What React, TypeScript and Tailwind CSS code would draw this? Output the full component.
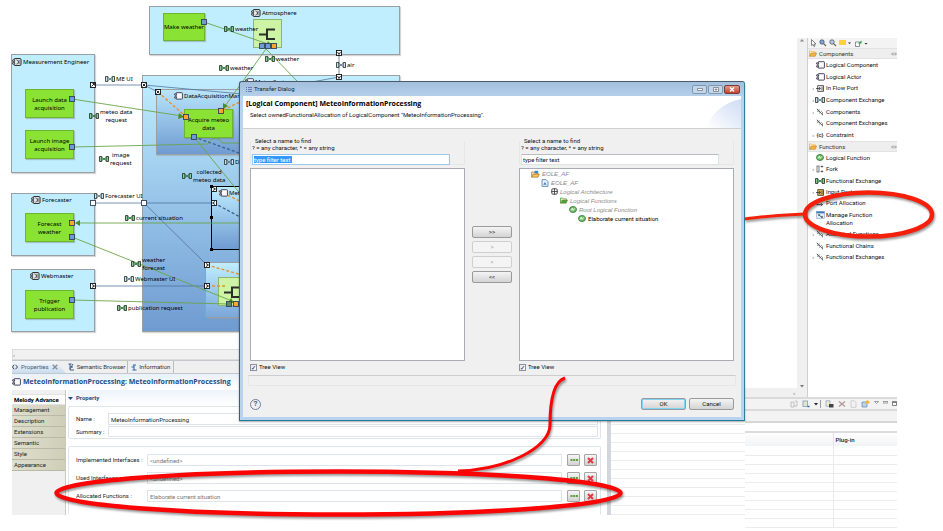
import type { ReactNode } from "react";

const UI = "font-['Roboto','Noto_Sans',sans-serif] text-[6px] leading-[8px]";

/* ---------- icons ---------- */

function ExchangeIcon({ green = false }: { green?: boolean }) {
  const c = green ? "#7fd08a" : "#cfe2f0";
  return (
    <svg className="h-[6px] w-[10px] shrink-0" viewBox="0 0 10 6">
      <path d="M.5 .5h2.300v5H.5zM9.500 .5H7.200v5h2.300z" fill={c} stroke="#1c2b24" strokeWidth=".8" />
      <path d="M2.800 1.200L4.200 2.600h1.600L7.200 1.200M2.800 4.800L4.200 3.400h1.600L7.200 4.800" fill="none" stroke="#1c2b24" strokeWidth=".7" />
      <path d="M3 3h4" stroke={green ? "#2f9a3a" : "#7fa4bf"} strokeWidth="1" />
    </svg>
  );
}

function ActorIcon() {
  return (
    <svg className="h-[8px] w-[10px] shrink-0" viewBox="0 0 10 8">
      <rect x="2" y=".6" width="7" height="6.8" rx="1" fill="#e8eef2" stroke="#222" strokeWidth="1" />
      <path d="M.5 2h2.2v1.4H.5zM.5 4.6h2.2V6H.5z" fill="#fff" stroke="#222" strokeWidth=".7" />
      <path d="M4.5 2l2 1.4v1.2l-2 1.4M7 2v4" fill="none" stroke="#333" strokeWidth=".8" />
    </svg>
  );
}

function ComponentIcon() {
  return (
    <svg className="h-[8px] w-[9px] shrink-0" viewBox="0 0 9 8">
      <rect x="2" y=".7" width="6.4" height="6.4" rx=".6" fill="#fff" stroke="#335" strokeWidth=".9" />
      <path d="M.6 1.8H2.6v1.2H.6zM.6 4.8h2V6h-2z" fill="#fff" stroke="#223" strokeWidth=".7" />
    </svg>
  );
}

function ForkGlyph() {
  return (
    <svg className="h-[14px] w-[17px]" viewBox="0 0 17 14">
      <path d="M0 7.500h7.500M16 2.500H8v9.500h8" fill="none" stroke="#2b2f2a" strokeWidth="2" />
    </svg>
  );
}

function FolderIcon({ color = "#f0b64a" }: { color?: string }) {
  return (
    <svg className="h-[7px] w-[8px] shrink-0" viewBox="0 0 8 7">
      <path d="M.5 6.2V1h2.2l.8.9h2.8v1.2" fill="#fff4cf" stroke={color} strokeWidth=".8" />
      <path d="M.5 6.3L2 3h5.6L6.2 6.3z" fill={color} stroke="#a8741c" strokeWidth=".5" />
    </svg>
  );
}

function FunctionIcon() {
  return (
    <svg className="h-[7px] w-[8px] shrink-0" viewBox="0 0 8 7">
      <ellipse cx="4" cy="3.5" rx="3.5" ry="3" fill="#6fc06a" stroke="#2c6e2f" strokeWidth=".8" />
      <path d="M2 4.6l1.4-2.6.5 2.4L6.4 2" fill="none" stroke="#f4fff2" strokeWidth=".8" />
    </svg>
  );
}

function LinkIcon() {
  return (
    <svg className="h-[8px] w-[8px] shrink-0" viewBox="0 0 8 8">
      <path d="M.8 .8l6 6.200" fill="none" stroke="#3f4540" strokeWidth=".9" />
      <path d="M1.500 3.500L4 1.500M3 5.500L6 3M2 1.500v2.500M6.500 4v3.500" fill="none" stroke="#66756a" strokeWidth=".7" />
    </svg>
  );
}

function PortIcon({ color = "#fff" }: { color?: string }) {
  return (
    <svg className="h-[7px] w-[8px] shrink-0" viewBox="0 0 8 7">
      <rect x="1.8" y=".7" width="5.6" height="5.6" fill={color} stroke="#333" strokeWidth=".8" />
      <path d="M0 3.5h4M3 2l1.8 1.5L3 5M6 1.5v4" fill="none" stroke="#333" strokeWidth=".8" />
    </svg>
  );
}

function ForkIcon() {
  return (
    <svg className="h-[8px] w-[8px] shrink-0" viewBox="0 0 8 8">
      <rect x="1" y="1" width="2" height="6" fill="#fff" stroke="#444" strokeWidth=".7" />
      <path d="M4.6 1.5h2.6M4.6 6.5h2.6M6 .6v2M6 5.4v2" stroke="#444" strokeWidth=".8" />
    </svg>
  );
}

function ConstraintIcon() {
  return <span className="w-[9px] text-center font-bold text-[#444]">{"{c}"}</span>;
}

function AllocationIcon() {
  return (
    <svg className="h-[7px] w-[8px] shrink-0" viewBox="0 0 8 7">
      <path d="M.8 2.2v2.4h5M4.8 3.2l1.8 1.4L4.8 6" fill="none" stroke="#444" strokeWidth=".9" />
    </svg>
  );
}

function ManageIcon() {
  return (
    <svg className="h-[8px] w-[9px] shrink-0" viewBox="0 0 9 8">
      <rect x=".5" y=".5" width="8" height="7" fill="#dcebf8" stroke="#8aa6c4" strokeWidth=".6" />
      <path d="M.5 .5h8v1.8h-8z" fill="#3f78b8" />
      <path d="M2 3.5h2v1H2zM5 5.4h2v1H5z" fill="#222" />
      <path d="M3.5 4.5L5.5 6" stroke="#222" strokeWidth=".7" />
    </svg>
  );
}

function ProjectIcon() {
  return (
    <svg className="h-[8px] w-[9px] shrink-0" viewBox="0 0 9 8">
      <path d="M.6 7V2h2l.8 1h3.4v1.2" fill="#ffe9a8" stroke="#a87a1c" strokeWidth=".7" />
      <path d="M.6 7.2L2 4.2h6.4L7 7.2z" fill="#f6c65c" stroke="#8a6414" strokeWidth=".6" />
      <path d="M3.4 .8h3.8v2.4H3.4z" fill="#3a86c4" />
    </svg>
  );
}

function ModelIcon() {
  return (
    <svg className="h-[8px] w-[8px] shrink-0" viewBox="0 0 8 8">
      <path d="M1 .6h4l2 2v4.8H1z" fill="#e8f2fb" stroke="#4b7aa8" strokeWidth=".8" />
      <path d="M2.2 5.8L4 3l1.6 2.8z" fill="#3d84c6" />
    </svg>
  );
}

function ArchitectureIcon() {
  return (
    <svg className="h-[7px] w-[7px] shrink-0" viewBox="0 0 7 7">
      <rect x=".8" y=".8" width="5.4" height="5.4" rx="1" fill="#fff" stroke="#333" strokeWidth=".9" />
      <path d="M3.5 .5v6M.5 3.5h6" stroke="#333" strokeWidth=".8" />
    </svg>
  );
}

/* ---------- diagram ---------- */

function Box({ className, children }: { className: string; children?: ReactNode }) {
  return (
    <div className={`absolute border border-[#9a9fa3] shadow-[1px_1px_1px_#9996] ${className}`}>{children}</div>
  );
}

function FunctionNode({ className, children }: { className: string; children: ReactNode }) {
  return (
    <div
      className={`absolute flex items-center justify-center whitespace-nowrap border border-[#6fb52c] bg-[#8ae234] text-center text-black shadow-[1px_1px_1px_#7776] ${className}`}
    >
      {children}
    </div>
  );
}

function Label({ className, icon, children }: { className: string; icon: ReactNode; children: ReactNode }) {
  return (
    <div className={`absolute flex items-center gap-px whitespace-nowrap text-black ${className}`}>
      {icon}
      <span className="text-center">{children}</span>
    </div>
  );
}

const squarePorts: [number, number, string][] = [
  [204, 22, "#6c9bd8"],
  [72, 99, "#6c9bd8"],
  [72, 147, "#6c9bd8"],
  [262, 46, "#6c9bd8"],
  [268, 46, "#6c9bd8"],
  [274, 46, "#fba62c"],
  [186, 117, "#fba62c"],
  [221, 111, "#fba62c"],
  [194, 137, "#6c9bd8"],
  [72, 223, "#fba62c"],
  [72, 237, "#6c9bd8"],
  [72, 300, "#6c9bd8"],
  [229, 304, "#5b8a6a"],
  [236, 304, "#fba62c"],
  [93, 203, "#ffffff"],
  [144, 203, "#ffffff"],
];

const arrowPorts: [number, number, string][] = [
  [93, 85, "M-1.5 1.5L1.5-1.5M-.5-1.5h2v2"],
  [144, 85, "M-1.5 1.5L1.5-1.5M1.5 1.5L-1-1"],
  [158, 92, "M-1.5-1.5L1.5 1.5M-1.5 1.5L1-1"],
  [339, 53, "M-1.5-1L0 1.5L1.5-1"],
  [339, 77, "M-1.5-1L0 1.5L1.5-1"],
  [93, 286, "M-1-1.5L1.5 0L-1 1.5"],
  [207, 265, "M-1-1.5L1.5 0L-1 1.5"],
  [207, 286, "M-1-1.5L1.5 0L-1 1.5"],
  [214, 189, "M-1-1.5L1.5 0L-1 1.5"],
  [214, 203, "M1-1.5L-1.5 0L1 1.5"],
];

function Diagram() {
  return (
    <div className="relative h-[349px] overflow-hidden font-['Noto_Sans',sans-serif] text-[6px] leading-[8px]">
      <Box className="left-[149px] top-[6px] h-[49px] w-[251px] bg-[#c0eeff]" />
      <Box className="left-[11px] top-[54px] h-[119px] w-[84px] bg-[#c0eeff]" />
      <Box className="left-[11px] top-[193px] h-[63px] w-[84px] bg-[#c0eeff]" />
      <Box className="left-[11px] top-[269px] h-[63px] w-[84px] bg-[#c0eeff]" />
      <Box className="left-[142px] top-[75px] h-[257px] w-[258px] bg-linear-to-b from-[#c0eeff] to-[#6f9bd1]" />
      <Box className="left-[156px] top-[89px] h-[66px] w-[150px] bg-linear-to-b from-[#b9e4fb] to-[#6f9bd1]" />
      <Box className="left-[205px] top-[262px] h-[56px] w-[100px] bg-linear-to-b from-[#c0eeff] to-[#7ba7da]" />
      <div className="absolute left-[211px] top-[186px] h-[64px] w-[100px] border border-black bg-linear-to-b from-[#c0eeff] to-[#6f9bd1]" />

      <FunctionNode className="left-[163px] top-[13px] h-[28px] w-[42px]">Make weather</FunctionNode>
      <FunctionNode className="left-[25px] top-[89px] h-[29px] w-[49px]">Launch data<br />acquisition</FunctionNode>
      <FunctionNode className="left-[25px] top-[130px] h-[29px] w-[49px]">Launch image<br />acquisition</FunctionNode>
      <FunctionNode className="left-[184px] top-[109px] h-[29px] w-[49px]">Acquire meteo<br />data</FunctionNode>
      <FunctionNode className="left-[25px] top-[213px] h-[29px] w-[49px]">Forecast<br />weather</FunctionNode>
      <FunctionNode className="left-[25px] top-[290px] h-[29px] w-[49px]">Trigger<br />publication</FunctionNode>
      <div className="absolute left-[253px] top-[19px] flex h-[29px] w-[29px] items-center justify-center border border-[#8ab868] bg-[#cdf3a4]">
        <ForkGlyph />
      </div>
      <div className="absolute left-[218px] top-[277px] flex h-[29px] w-[29px] items-center justify-center border border-[#8ab868] bg-[#cdf3a4]">
        <ForkGlyph />
      </div>

      <svg className="absolute left-0 top-0 h-[349px] w-[420px]" viewBox="0 0 420 349" fill="none">
        <g stroke="#4a6f9a" strokeWidth="1" opacity=".75">
          <path d="M93 85H144L242 94M144 85L158 92M339 53V77L312 82" />
          <path d="M93 203H214M144 203L207 265M93 286H207" />
        </g>
        <g stroke="#6ba548" strokeWidth=".9">
          <path d="M204 22L268 44M266 49L225 106M266 49L298 82M72 99L182 116" />
          <path d="M72 147L208 144C209 137 221 137 222 143H242M194 137L242 196" />
          <path d="M242 223H78M72 237L232 301M72 300L229 304" />
        </g>
        <g fill="#4a8f22">
          <path d="M272 46l-6 0 2-5zM223 109l0-6 5 3zM184 117l-6 2 1-6zM75 223l5-3v6zM234 303l-6 0 3-5z" />
        </g>
        <g stroke="#e8932c" strokeWidth="1.4" strokeDasharray="3 2">
          <path d="M158 92L184 115M223 110L242 101M214 189L242 202M207 265L242 275M207 286H226" />
        </g>
        <g stroke="#39628f" strokeWidth="1.3" strokeDasharray="3 2">
          <path d="M194 137L242 154M214 203L242 218" />
        </g>
        {squarePorts.map(([x, y, fill]) => (
          <rect key={`${x}-${y}`} x={x - 2.5} y={y - 2.5} width="5" height="5" fill={fill} stroke="#33435a" strokeWidth=".9" />
        ))}
        {arrowPorts.map(([x, y, d]) => (
          <g key={`${x}-${y}`} transform={`translate(${x} ${y})`}>
            <rect x="-2.5" y="-2.5" width="5" height="5" fill="#fff" stroke="#111" strokeWidth=".9" />
            <path d={d} stroke="#111" strokeWidth=".9" />
          </g>
        ))}
        <path d="M210 185h3v3h-3zM210 216h3v3h-3zM210 248h3v3h-3z" fill="#000" />
      </svg>

      <Label className="left-[251px] top-[9px]" icon={<ActorIcon />}>Atmosphere</Label>
      <Label className="left-[12px] top-[58px]" icon={<ActorIcon />}>Measurement Engineer</Label>
      <Label className="left-[31px] top-[196px]" icon={<ActorIcon />}>Forecaster</Label>
      <Label className="left-[30px] top-[272px]" icon={<ActorIcon />}>Webmaster</Label>
      <Label className="left-[174px] top-[92px]" icon={<ComponentIcon />}>DataAcquisitionManager</Label>
      <Label className="left-[219px] top-[189px]" icon={<ComponentIcon />}>MeteoInformationProcessing</Label>
      <Label className="left-[245px] top-[78px]" icon={<ComponentIcon />}>MeteoSystem</Label>
      <Label className="left-[224px] top-[25px]" icon={<ExchangeIcon green />}>weather</Label>
      <Label className="left-[219px] top-[64px]" icon={<ExchangeIcon green />}>weather</Label>
      <Label className="left-[265px] top-[55px]" icon={<ExchangeIcon green />}>weather</Label>
      <Label className="left-[336px] top-[61px]" icon={<ExchangeIcon />}>air</Label>
      <Label className="left-[105px] top-[75px]" icon={<ExchangeIcon />}>ME UI</Label>
      <Label className="left-[89px] top-[108px]" icon={<ExchangeIcon green />}>meteo data<br />request</Label>
      <Label className="left-[99px] top-[151px]" icon={<ExchangeIcon green />}>image<br />request</Label>
      <Label className="left-[182px] top-[168px]" icon={<ExchangeIcon green />}>collected<br />meteo data</Label>
      <Label className="left-[224px] top-[158px]" icon={<ExchangeIcon />}>Data</Label>
      <Label className="left-[94px] top-[192px]" icon={<ExchangeIcon />}>Forecaster UI</Label>
      <Label className="left-[125px] top-[214px]" icon={<ExchangeIcon green />}>current situation</Label>
      <Label className="left-[131px] top-[256px]" icon={<ExchangeIcon green />}>weather<br />forecast</Label>
      <Label className="left-[124px] top-[275px]" icon={<ExchangeIcon />}>Webmaster UI</Label>
      <Label className="left-[117px] top-[304px]" icon={<ExchangeIcon green />}>publication request</Label>
    </div>
  );
}

/* ---------- properties view ---------- */

const sections = ["Melody Advance", "Management", "Description", "Extensions", "Semantic", "Style", "Appearance"];

const references = [
  { id: "implemented", label: "Implemented Interfaces :", value: "<undefined>" },
  { id: "used", label: "Used Interfaces :", value: "<undefined>" },
  { id: "allocated", label: "Allocated Functions :", value: "Elaborate current situation" },
];

function SmallButton({ label, children }: { label: string; children: ReactNode }) {
  return (
    <button
      aria-label={label}
      className="flex h-[12px] w-[13px] shrink-0 items-center justify-center rounded-[1px] border border-[#a5a5a5] bg-linear-to-b from-[#f6f6f6] to-[#d2d2d2]"
    >
      {children}
    </button>
  );
}

function Properties() {
  return (
    <section className="ml-3 flex h-[166px] flex-col">
      <div className="flex h-[11px] shrink-0 items-center border border-[#dcdcdc] bg-[#f1f1f1] text-[6px] text-[#666]">‹</div>
      <div role="tablist" className="flex h-[14px] shrink-0 items-stretch border-y border-[#c4c8cc] bg-[#efefef] text-[#333]">
        <button role="tab" aria-selected="true" className="flex items-center gap-[3px] bg-linear-to-b from-[#f4f8fc] to-[#c9dcef] pr-2 text-[#4a6079] [clip-path:polygon(0_0,82%_0,100%_100%,0_100%)]">
          <svg className="h-[6px] w-[6px]" viewBox="0 0 6 6"><path d="M2 .8L.5 3 2 5.2M3.5 .8L5.5 3 3.5 5.2" fill="none" stroke="#333" strokeWidth=".9" /></svg>
          Properties
          <svg className="h-[6px] w-[6px]" viewBox="0 0 6 6"><path d="M.7 .7l4.6 4.6M5.3 .7L.7 5.3" stroke="#8a9099" strokeWidth="1.4" /></svg>
        </button>
        <button role="tab" aria-selected="false" className="flex items-center gap-[2px] border-r border-[#b9bdc2] px-[2px]">
          <svg className="h-[8px] w-[7px]" viewBox="0 0 7 8"><path d="M.5 1h3M2 1v6h4M2 4h3M5 1L2 6" fill="none" stroke="#34608f" strokeWidth="1" /></svg>
          Semantic Browser
        </button>
        <button role="tab" aria-selected="false" className="flex items-center gap-[2px] border-r border-[#b9bdc2] px-[3px]">
          <svg className="h-[7px] w-[6px]" viewBox="0 0 6 7"><path d="M2 1h3M3 1v5M1.5 6h4M.5 3h2" stroke="#2c6cb0" strokeWidth="1.1" /></svg>
          Information
        </button>
      </div>
      <h2 className="flex h-[16px] shrink-0 items-center gap-[2px] bg-linear-to-b from-[#e9f1fa] to-white font-['Open_Sans',sans-serif] text-[7px] font-bold text-[#1f4e83]">
        <ComponentIcon />
        <span>MeteoInformationProcessing: MeteoInformationProcessing</span>
      </h2>
      <div className="flex min-h-0 flex-1">
        <nav className="w-[54px] shrink-0 border-r border-[#c9c9bd] bg-[#f0f0f1] pt-[4px]">
          {sections.map((name, i) => (
            <button
              key={name}
              className={
                i === 0
                  ? "block h-[11px] w-full whitespace-nowrap border-y border-[#e3e3e3] bg-white pl-[2px] text-left font-bold text-black"
                  : "block h-[11px] w-full border-b border-[#b9b9a8] bg-linear-to-r from-[#dfdfcf] to-[#cfcfb8] pl-[2px] text-left text-[#222]"
              }
            >
              {name}
            </button>
          ))}
        </nav>
        <div className="min-w-0 flex-1 bg-white pl-[2px] pr-[6px]">
          <h3 className="flex h-[16px] items-center gap-[3px] bg-linear-to-b from-[#edf3fb] to-white text-[6px] font-bold text-[#1f4e83]">
            <svg className="h-[3px] w-[5px]" viewBox="0 0 5 3"><path d="M0 0h5L2.5 3z" fill="#1f4e83" /></svg>
            Property
          </h3>
          <div className="flex flex-col gap-px rounded-[2px] border border-[#dfe5ee] pb-px pl-[7px] pr-[2px] pt-[6px]">
            <div className="flex items-center">
              <label htmlFor="prop-name" className="w-[32px]">Name :</label>
              <input id="prop-name" className="h-[12px] min-w-0 flex-1 border border-[#dfe3ea] px-[2px]" defaultValue="MeteoInformationProcessing" />
            </div>
            <div className="flex items-center">
              <label htmlFor="prop-summary" className="w-[32px]">Summary :</label>
              <input id="prop-summary" className="h-[11px] min-w-0 flex-1 border border-[#dfe3ea] px-[2px]" />
            </div>
          </div>
          <div className="mt-[7px] flex flex-col gap-[6px] rounded-[2px] border border-b-0 border-[#dfe5ee] pb-[13px] pl-[7px] pr-[3px] pt-[7px]">
            {references.map((row) => (
              <div key={row.id} className="flex items-center">
                <label htmlFor={row.id} className="w-[71px] shrink-0">{row.label}</label>
                <input id={row.id} readOnly className="mr-[5px] h-[12px] min-w-0 flex-1 border border-[#dfe3ea] px-[2px] text-[#777]" value={row.value} />
                <div className="flex gap-[4px]">
                  <SmallButton label={`Browse ${row.label}`}>
                    <svg className="h-[2px] w-[8px]" viewBox="0 0 8 2"><path d="M.5 0h2v2h-2zM3.2 0h2v2h-2zM5.9 0h2v2h-2z" fill="#5a9e3c" /></svg>
                  </SmallButton>
                  <SmallButton label={`Clear ${row.label}`}>
                    <svg className="h-[7px] w-[7px]" viewBox="0 0 7 7"><path d="M1 1l5 5M6 1L1 6" stroke="#dc3a44" strokeWidth="2" /></svg>
                  </SmallButton>
                </div>
              </div>
            ))}
          </div>
        </div>
      </div>
    </section>
  );
}

/* ---------- palette ---------- */

type Tool = { icon: ReactNode; name: ReactNode; more?: boolean };

const componentTools: Tool[] = [
  { icon: <ComponentIcon />, name: "Logical Component" },
  { icon: <ComponentIcon />, name: "Logical Actor" },
  { icon: <PortIcon />, name: "In Flow Port", more: true },
  { icon: <ExchangeIcon />, name: "Component Exchange", more: true },
  { icon: <LinkIcon />, name: "Components", more: true },
  { icon: <LinkIcon />, name: "Component Exchanges" },
  { icon: <ConstraintIcon />, name: "Constraint", more: true },
];

const functionTools: Tool[] = [
  { icon: <FunctionIcon />, name: "Logical Function" },
  { icon: <ForkIcon />, name: "Fork", more: true },
  { icon: <ExchangeIcon green />, name: "Functional Exchange" },
  { icon: <PortIcon color="#f5b54a" />, name: "Input Port", more: true },
  { icon: <AllocationIcon />, name: "Port Allocation" },
  { icon: <ManageIcon />, name: <>Manage Function<br />Allocation</> },
  { icon: <LinkIcon />, name: "Allocated Functions", more: true },
  { icon: <LinkIcon />, name: "Functional Chains" },
  { icon: <LinkIcon />, name: "Functional Exchanges", more: true },
];

function Drawer({ title, tools, height }: { title: string; tools: Tool[]; height: string }) {
  return (
    <div>
      <h4 className="flex h-[11px] items-center gap-[2px] border-y border-[#e2e2e2] bg-[#eeeeee] pl-px text-[#333]">
        <FolderIcon />
        <span className="flex-1">{title}</span>
        <svg className="h-[4px] w-[6px]" viewBox="0 0 6 4"><path d="M2 .5L.5 2 2 3.5M4 .5L5.500 2 4 3.500M1 2h4" fill="none" stroke="#888" strokeWidth=".7" /></svg>
      </h4>
      <ul className={`flex flex-col justify-around ${height}`}>
        {tools.map((t, i) => (
          <li key={i} className="flex items-start">
            <span className="w-[6px] shrink-0 text-right text-[#555]">{t.more ? "›" : ""}</span>
            <span className="flex h-[8px] w-[12px] shrink-0 items-center justify-center">{t.icon}</span>
            <span className="whitespace-nowrap text-[#111]">{t.name}</span>
          </li>
        ))}
      </ul>
    </div>
  );
}

function Palette() {
  return (
    <aside className="w-[90px] overflow-hidden border-l border-[#cfcfcf]">
      <div className="flex h-[10px] items-center gap-[2px] bg-[#f3f3f3] pl-[2px]">
        <svg className="h-[8px] w-[7px]" viewBox="0 0 7 8"><path d="M1.5 .5v6l1.5-1 1 2 1-.5-1-2h2z" fill="#fff" stroke="#555" strokeWidth=".7" /></svg>
        <svg className="h-[8px] w-[8px]" viewBox="0 0 8 8"><circle cx="3" cy="3" r="2.2" fill="#7aa6dc" stroke="#445" strokeWidth=".7" /><path d="M4.6 4.6L7 7" stroke="#665" strokeWidth="1.1" /></svg>
        <svg className="h-[8px] w-[8px]" viewBox="0 0 8 8"><circle cx="3" cy="3" r="2.2" fill="#b7cbe8" stroke="#445" strokeWidth=".7" /><path d="M4.6 4.6L7 7" stroke="#665" strokeWidth="1.1" /></svg>
        <svg className="h-[6px] w-[12px]" viewBox="0 0 12 6"><path d="M0 0h7v5H0z" fill="#fbd13d" /><path d="M9 2.5h3L10.500 4z" fill="#222" /></svg>
        <svg className="ml-[2px] h-[7px] w-[13px]" viewBox="0 0 13 7"><path d="M.5 2h4v4.500h-4z" fill="#fff" stroke="#567" strokeWidth=".7" /><path d="M3 3.500L6.500 .5v3z" fill="#2c9a3c" /><path d="M9.500 3h3L11 4.500z" fill="#222" /></svg>
      </div>
      <Drawer title="Components" tools={componentTools} height="h-[82px]" />
      <Drawer title="Functions" tools={functionTools} height="h-[111px]" />
    </aside>
  );
}

/* ---------- problems view ---------- */

function ProblemsView() {
  return (
    <section className="bg-white">
      <div className="flex h-[14px] items-center justify-end gap-[4px] border-y-2 border-[#dadada] bg-[#f3f3f3]">
        <svg className="h-[8px] w-[8px]" viewBox="0 0 8 8"><path d="M1 2h3v5H1zM5 1h2v5H4" fill="none" stroke="#bbb" strokeWidth=".9" /></svg>
        <svg className="h-[8px] w-[8px]" viewBox="0 0 8 8"><rect x="1" y="1" width="4.500" height="5.500" fill="#dfe9c8" stroke="#8aa6c4" strokeWidth=".9" /><path d="M5.500 6.500h2" stroke="#2c6cb0" strokeWidth="1.500" /></svg>
        <svg className="h-[8px] w-[7px]" viewBox="0 0 7 8"><path d="M0 3h4L2 5.500z" fill="#222" /><path d="M6.500 0v8" stroke="#888" strokeWidth=".8" /></svg>
        <svg className="h-[8px] w-[9px]" viewBox="0 0 9 8"><path d="M1 .8h4v5.500H1z" fill="#f6edc8" stroke="#8aa6c4" strokeWidth=".8" /><path d="M4 4h4.500v3.500H4z" fill="#444" /></svg>
        <svg className="h-[8px] w-[8px]" viewBox="0 0 8 8"><path d="M1 1.500l6 5M7 1.500l-6 5" stroke="#b59a9f" strokeWidth="1.500" /></svg>
        <svg className="h-[8px] w-[7px]" viewBox="0 0 7 8"><path d="M1 .8h3.500l1.500 1.500v5H1z" fill="#f2f2f2" stroke="#c6c6c6" strokeWidth=".8" /></svg>
        <svg className="h-[8px] w-[9px]" viewBox="0 0 9 8"><path d="M1 2h5v5H1z" fill="#b9d3ef" stroke="#6a8fbb" strokeWidth=".8" /><path d="M4 3L6 0l3 2-2 2z" fill="#f2b632" /></svg>
        <svg className="h-[8px] w-[5px]" viewBox="0 0 5 8"><path d="M.5 1.500h4L2.500 3.500z" fill="#fff" stroke="#777" strokeWidth=".7" /></svg>
        <svg className="h-[8px] w-[5px]" viewBox="0 0 5 8"><path d="M0 1.500h5v1.500H0z" fill="#fff" stroke="#777" strokeWidth=".7" /></svg>
        <svg className="h-[8px] w-[5px]" viewBox="0 0 5 8"><path d="M.5 1.500h4v4h-4zM.5 2.500h4" fill="#fff" stroke="#666" strokeWidth=".8" /></svg>
      </div>
      <div className="h-[12px] border-b-2 border-[#d6d6d6] bg-[#f3f3f3]" />
      <table className="mt-[8px] w-full border-collapse border-t-2 border-[#dcdcdc]">
        <thead>
          <tr className="h-[14px] bg-linear-to-b from-white to-[#f2f3f5]">
            <th className="w-[88px]" />
            <th className="border-l border-[#e4e4e4] pl-[2px] text-left font-medium text-[#222]">Plug-in</th>
          </tr>
        </thead>
        <tbody>
          {Array.from({ length: 9 }, (_, i) => (
            <tr key={i} className="h-[9px] border-b border-[#ececec]">
              <td />
              <td className="border-l border-[#ececec]" />
            </tr>
          ))}
        </tbody>
      </table>
    </section>
  );
}

/* ---------- transfer dialog ---------- */

const treeNodes = [
  { pad: "pl-[11px]", icon: <ProjectIcon />, name: "EOLE_AF" },
  { pad: "pl-[21px]", icon: <ModelIcon />, name: "EOLE_AF" },
  { pad: "pl-[31px]", icon: <ArchitectureIcon />, name: "Logical Architecture" },
  { pad: "pl-[40px]", icon: <FolderIcon color="#3fa648" />, name: "Logical Functions" },
  { pad: "pl-[49px]", icon: <FunctionIcon />, name: "Root Logical Function" },
];

function DialogButton({ children, className = "", disabled }: { children: ReactNode; className?: string; disabled?: boolean }) {
  return (
    <button
      disabled={disabled}
      className={`h-[12px] rounded-[2px] border border-[#9a9a9a] bg-linear-to-b from-[#f4f4f4] to-[#d4d4d4] text-center text-[#111] disabled:border-[#cfcfcf] disabled:from-[#f4f4f4] disabled:to-[#f4f4f4] disabled:text-[#999] ${className}`}
    >
      <span className="block leading-[10px]">{children}</span>
    </button>
  );
}

function Selector({ id, focused, children }: { id: string; focused?: boolean; children?: ReactNode }) {
  return (
    <div className="flex w-[215px] flex-col">
      <fieldset className="h-[28px] rounded-[2px] border border-t-0 border-[#e3e7ea] pl-px">
        <legend className="px-[3px]">Select a name to find</legend>
        <label htmlFor={id} className="-mt-px block">? = any character, * = any string</label>
        <input
          id={id}
          defaultValue={focused ? undefined : "type filter text"}
          aria-label={focused ? "type filter text" : undefined}
          placeholder={focused ? "type filter text" : undefined}
          className={
            focused
              ? "mt-[2px] block h-[11px] w-[198px] border border-[#9cc8ea] bg-white bg-[linear-gradient(#3399ff,#3399ff)] bg-[length:38px_7px] bg-[position:1px_1px] bg-no-repeat px-px placeholder:text-white placeholder:opacity-100"
              : "mt-[2px] block h-[11px] w-[198px] border border-[#dfe3e6] border-t-[#b9bcc0] bg-white px-px"
          }
        />
      </fieldset>
      <div className="mt-[3px] h-[193px] border border-[#a9adb3] bg-white">{children}</div>
      <label className="mt-[2px] flex h-[8px] items-center gap-[2px]">
        <input
          type="checkbox"
          defaultChecked
          className="h-[7px] w-[7px] appearance-none border border-[#8e9097] bg-white bg-[linear-gradient(135deg,#dfe4ee,#fff)] checked:after:block checked:after:text-[6px] checked:after:leading-[5px] checked:after:font-bold checked:after:text-[#3a4f96] checked:after:content-['✓']"
        />
        Tree View
      </label>
    </div>
  );
}

function TransferDialog() {
  return (
    <div
      role="dialog"
      aria-label="Transfer Dialog"
      className="absolute left-[239px] top-[81px] flex w-[506px] flex-col rounded-t-[3px] border border-[#4b5a6b] border-b-[#1c7a9c] border-r-[#2f7f94] bg-[#b9d3ee] px-[3px] pb-[3px] shadow-[0_1px_2px_#0005]"
    >
      <div className="-mx-[3px] flex h-[14px] items-center rounded-t-[3px] bg-linear-to-b from-[#a3bfdd] to-[#b5cfea] pl-[6px] pr-[4px] text-[#222]">
        <svg className="h-[7px] w-[6px]" viewBox="0 0 6 7"><path d="M0 1.500h1M0 3.500h1M0 5.500h1M2 1.500h4M2 3.500h4M2 5.500h4" stroke="#6b78b8" strokeWidth="1" /></svg>
        <span className="flex-1 pl-[2px]">Transfer Dialog</span>
        <button aria-label="Minimize" className="flex h-[9px] w-[15px] items-center justify-center rounded-[2px] border border-[#8097b0] bg-[#c3d6ea]">
          <svg className="h-[3px] w-[6px]" viewBox="0 0 6 3"><path d="M.5 .5h5v2h-5z" fill="#fff" stroke="#556" strokeWidth=".6" /></svg>
        </button>
        <button aria-label="Maximize" className="ml-px flex h-[9px] w-[15px] items-center justify-center rounded-[2px] border border-[#8097b0] bg-[#c3d6ea]">
          <svg className="h-[5px] w-[6px]" viewBox="0 0 6 5"><path d="M.5 .5h5v4h-5zM2 2h2v1H2z" fill="#fff" stroke="#556" strokeWidth=".6" /></svg>
        </button>
        <button aria-label="Close" className="ml-px flex h-[9px] w-[16px] items-center justify-center rounded-[2px] border border-[#7c3b34] bg-linear-to-b from-[#e09a8c] to-[#c2402c]">
          <svg className="h-[5px] w-[6px]" viewBox="0 0 6 5"><path d="M1 .5l4 4M5 .5l-4 4" stroke="#fff" strokeWidth="1.300" /></svg>
        </button>
      </div>

      <header className="flex h-[33px] border-b border-[#d0d0d0] bg-white">
        <div className="flex-1 pl-[3px] pt-[3px]">
          <h1 className="font-['Open_Sans',sans-serif] text-[7px] font-bold leading-[9px] text-black">[Logical Component] MeteoInformationProcessing</h1>
          <p className="pl-[4px] pt-[3px] text-[#111]">Select ownedFunctionalAllocation of LogicalComponent "MeteoInformationProcessing".</p>
        </div>
        <svg className="h-[32px] w-[36px]" viewBox="0 0 36 32">
          <defs>
            <linearGradient id="corner" x1="0" y1="1" x2="1" y2="0">
              <stop offset="0" stopColor="#fff" />
              <stop offset="1" stopColor="#cfdcf5" />
            </linearGradient>
          </defs>
          <path d="M2 32C6 17 18 7 36 3V32z" fill="url(#corner)" />
        </svg>
      </header>

      <div className="bg-[#f0f0f0] pb-[7px] pl-[7px] pr-[7px] pt-[8px] text-[#111]">
        <div className="flex items-start justify-between">
          <Selector id="available" focused />
          <div className="flex flex-col gap-[3px] pt-[89px]">
            <DialogButton className="w-[40px]">&gt;&gt;</DialogButton>
            <DialogButton className="w-[40px]" disabled>&gt;</DialogButton>
            <DialogButton className="w-[40px]" disabled>&lt;</DialogButton>
            <DialogButton className="w-[40px]">&lt;&lt;</DialogButton>
          </div>
          <Selector id="selected">
            <ul className="text-[#8a8a8a]">
              {treeNodes.map((n, i) => (
                <li key={i} className={`flex h-[9px] items-center gap-[2px] font-['Liberation_Sans',sans-serif] italic ${n.pad}`}>
                  {n.icon}
                  {n.name}
                </li>
              ))}
              <li className="flex h-[9px] items-center gap-[2px] pl-[58px] text-black">
                <FunctionIcon />
                Elaborate current situation
              </li>
            </ul>
          </Selector>
        </div>
        <div className="-mx-[2px] mt-[4px] h-[11px] border border-[#e6e6e6] border-t-[#cdcdcd]" />
        <div className="mt-[12px] flex items-center">
          <button aria-label="Help" className="flex h-[11px] w-[11px] items-center justify-center rounded-full border border-[#6d7f99] text-[8px] font-bold text-[#4a628a]">?</button>
          <DialogButton className="ml-auto w-[45px] border-[#3c9cc8] from-[#eaf6fb] to-[#c4e4f2] shadow-[inset_0_0_0_1px_#7fd3f5]">OK</DialogButton>
          <DialogButton className="ml-[3px] w-[45px]">Cancel</DialogButton>
        </div>
      </div>
    </div>
  );
}

/* ---------- annotations ---------- */

function Annotations() {
  return (
    <svg
      className="pointer-events-none absolute left-0 top-0 h-[531px] w-[943px] drop-shadow-[1px_2px_1px_#0006]"
      viewBox="0 0 943 531"
      fill="none"
      stroke="#fb0404"
    >
      <ellipse cx="338.500" cy="493" rx="282" ry="21.500" strokeWidth="4.500" />
      <path d="M565 378C552 382 550 408 550 425C550 448 505 470 458 471" strokeWidth="3" />
      <ellipse cx="868.500" cy="214.500" rx="63.500" ry="22" strokeWidth="4.500" stroke="#f5200c" />
      <path d="M745 219C765 216 785 215 805 214" strokeWidth="3" stroke="#f5200c" />
    </svg>
  );
}

export default function App() {
  return (
    <div className={`relative min-h-screen overflow-hidden bg-white text-[#222] ${UI}`}>
      <main className="flex items-start pr-[46px]">
        <div className="min-w-0 flex-1">
          <Diagram />
          <Properties />
        </div>
        <div className="mt-[397px] w-[138px] shrink-0 self-start border-l-4 border-[#d3d6da] pt-[19px]">
          {Array.from({ length: 11 }, (_, i) => (
            <div key={i} className="h-[9px] border-b border-[#ececec] bg-white" />
          ))}
        </div>
        <div className="w-[152px] shrink-0 pt-[38px]">
          <div className="flex h-[359px]">
            <div className="flex flex-1 flex-col justify-end">
              <div className="flex h-[9px] items-center justify-end bg-[#f0f0f0] pr-[2px] text-[#555]">›</div>
            </div>
            <div className="flex w-[10px] flex-col items-center justify-between bg-[#f0f0f0] pb-[9px] pt-px text-[#555]">
              <svg className="h-[3px] w-[4px]" viewBox="0 0 4 3"><path d="M0 2.500h4L2 0z" fill="#888" /></svg>
              <svg className="h-[3px] w-[4px]" viewBox="0 0 4 3"><path d="M0 0h4L2 2.500z" fill="#777" /></svg>
            </div>
            <Palette />
          </div>
          <ProblemsView />
        </div>
      </main>
      <TransferDialog />
      <Annotations />
    </div>
  );
}
